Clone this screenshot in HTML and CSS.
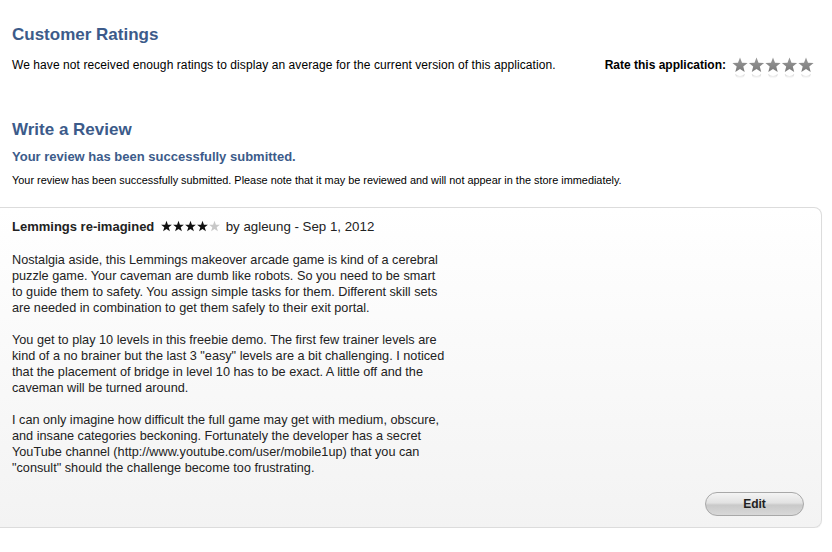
FILE: index.html
```html
<!DOCTYPE html>
<html>
<head>
<meta charset="utf-8">
<link rel="stylesheet" href="styles.css">
</head>
<body>
<div class="page">
  <section class="ratings">
    <h2 class="heading">Customer Ratings</h2>
    <div class="rate-row">
      <p class="note">We have not received enough ratings to display an average for the current version of this application.</p>
      <div class="rate">
        <span class="rate-label">Rate this application:</span>
        <svg class="rate-stars" width="82" height="28" viewBox="0 0 82 28">
          <defs>
            <linearGradient id="sg" x1="0" y1="0" x2="0" y2="1">
              <stop offset="0" stop-color="#9a9a9a"/>
              <stop offset="1" stop-color="#7a7a7a"/>
            </linearGradient>
            <linearGradient id="rg" x1="0" y1="0" x2="0" y2="1">
              <stop offset="0" stop-color="#c4c4c4" stop-opacity="0.9"/>
              <stop offset="1" stop-color="#e8e8e8" stop-opacity="0"/>
            </linearGradient>
            <path id="star" d="M8 0.5 L10 5.7 L15.6 6 L11.3 9.6 L12.7 15 L8 12 L3.3 15 L4.7 9.6 L0.4 6 L6 5.7 Z"/>
            <path id="refl" d="M3.3 0 Q8 4 12.7 0 L12.2 2.5 Q8 7 3.8 2.5 Z"/>
          </defs>
          <use href="#star" x="0" y="0" fill="url(#sg)"/>
          <use href="#star" x="16.5" y="0" fill="url(#sg)"/>
          <use href="#star" x="33" y="0" fill="url(#sg)"/>
          <use href="#star" x="49.5" y="0" fill="url(#sg)"/>
          <use href="#star" x="66" y="0" fill="url(#sg)"/>
          <use href="#refl" x="0" y="17" fill="url(#rg)"/>
          <use href="#refl" x="16.5" y="17" fill="url(#rg)"/>
          <use href="#refl" x="33" y="17" fill="url(#rg)"/>
          <use href="#refl" x="49.5" y="17" fill="url(#rg)"/>
          <use href="#refl" x="66" y="17" fill="url(#rg)"/>
        </svg>
      </div>
    </div>
  </section>
  <section class="write">
    <h2 class="heading">Write a Review</h2>
    <h3 class="success">Your review has been successfully submitted.</h3>
    <p class="small">Your review has been successfully submitted. Please note that it may be reviewed and will not appear in the store immediately.</p>
  </section>
  <div class="review">
    <div class="review-head"><b>Lemmings re-imagined</b>
      <svg class="stars" width="60" height="12" viewBox="0 0 60 12" aria-label="4 of 5 stars">
        <defs>
          <path id="ms" d="M5.5 0.3 L6.9 4.2 L10.9 4.3 L7.7 6.8 L8.9 10.7 L5.5 8.4 L2.1 10.7 L3.3 6.8 L0.1 4.3 L4.1 4.2 Z"/>
        </defs>
        <use href="#ms" x="0" y="0.5" fill="#111"/>
        <use href="#ms" x="12" y="0.5" fill="#111"/>
        <use href="#ms" x="24" y="0.5" fill="#111"/>
        <use href="#ms" x="36" y="0.5" fill="#111"/>
        <use href="#ms" x="48" y="0.5" fill="#c8c8c8"/>
      </svg>
      by agleung - Sep 1, 2012</div>
    <div class="review-body">
      <p>Nostalgia aside, this Lemmings makeover arcade game is kind of a cerebral puzzle game. Your caveman are dumb like robots. So you need to be smart to guide them to safety. You assign simple tasks for them. Different skill sets are needed in combination to get them safely to their exit portal.</p>
      <p>You get to play 10 levels in this freebie demo. The first few trainer levels are kind of a no brainer but the last 3 "easy" levels are a bit challenging. I noticed that the placement of bridge in level 10 has to be exact. A little off and the caveman will be turned around.</p>
      <p>I can only imagine how difficult the full game may get with medium, obscure, and insane categories beckoning. Fortunately the developer has a secret YouTube channel (http://www.youtube.com/user/mobile1up) that you can "consult" should the challenge become too frustrating.</p>
    </div>
    <div class="review-foot"><button class="edit">Edit</button></div>
  </div>
</div>
</body>
</html>
```
FILE: styles.css
```css
* { box-sizing: border-box; }
html, body { margin: 0; padding: 0; background: #fff; }
body { font-family: "Liberation Sans", Arial, Helvetica, sans-serif; color: #000; }
.page { width: 832px; padding: 0 10px 0 0; }
.heading { margin: 0; font-size: 17px; font-weight: bold; color: #3c5b8a; line-height: 22px; }
.ratings { padding: 24px 0 0 12px; }
.rate-row { display: flex; justify-content: space-between; align-items: flex-start; margin-top: 8px; padding-right: 8px; }
.note { margin: 4px 0 0; font-size: 12px; line-height: 15px; letter-spacing: 0.08px; }
.rate { display: flex; align-items: flex-start; }
.rate-label { font-size: 12px; font-weight: bold; line-height: 15px; margin-top: 4px; margin-right: 6px; }
.rate-stars { display: block; margin-top: 3px; }
.write { padding: 34px 0 0 12px; }
.success { margin: 8px 0 0; font-size: 13px; font-weight: bold; color: #3c5b8a; line-height: 16px; }
.small { margin: 8px 0 0; font-size: 10.9px; line-height: 14px; }
.review { margin: 20px 0 0 -1px; width: 823px; border: 1px solid #dcdcdc; border-radius: 0 8px 8px 0; border-left: none; background: linear-gradient(to bottom, #ffffff 0%, #f3f3f3 100%); padding: 11px 12px 11px 13px; min-height: 321px; box-shadow: 0 1px 1px rgba(0,0,0,0.05); }
.review-head { font-size: 13.3px; line-height: 16px; color: #222; }
.review-head b { font-size: 13px; margin-right: 3px; }
.stars { display: inline-block; vertical-align: -1px; margin-right: 1px; }
.review-body { width: 435.5px; margin-top: 17px; font-size: 12.7px; line-height: 16px; color: #222; }
.review-body p { margin: 0 0 16px; }
.review-foot { display: flex; justify-content: flex-end; margin-top: 5px; padding-right: 5px; }
.edit { width: 99px; height: 24px; border-radius: 12px; border: 1px solid #a8a8a8; background: linear-gradient(to bottom, #f4f4f4 0%, #e2e2e2 45%, #c9c9c9 55%, #d8d8d8 100%); font-family: "Liberation Sans", Arial, sans-serif; font-weight: bold; font-size: 12px; color: #222; padding: 0; }
```
